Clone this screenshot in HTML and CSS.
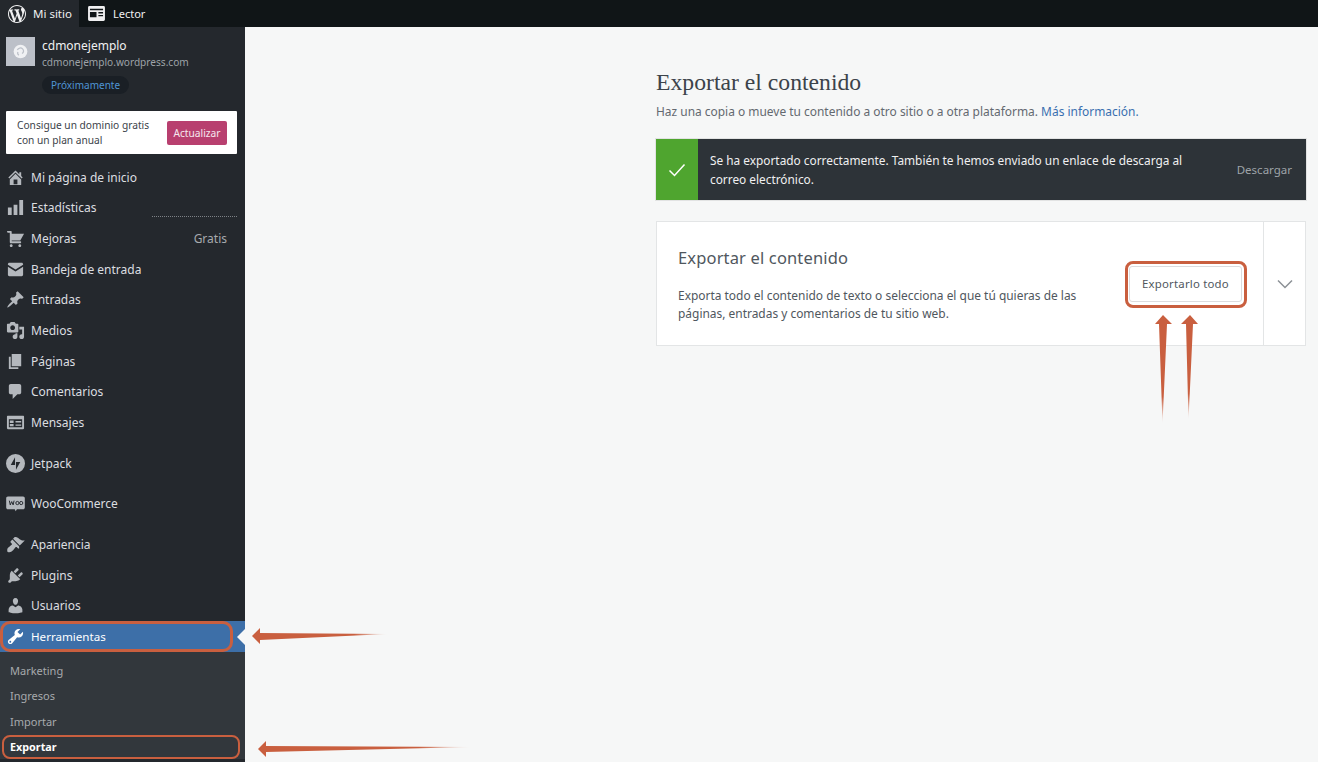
FILE: index.html
```html
<!DOCTYPE html>
<html lang="es">
<head>
<meta charset="utf-8">
<title>Exportar el contenido</title>
<link rel="stylesheet" href="styles.css">
</head>
<body>
<header class="topbar">
  <a class="tab tab-active">
    <svg class="wp-logo" viewBox="0 0 20 20"><path d="M20 10c0-5.51-4.49-10-10-10C4.48 0 0 4.49 0 10c0 5.52 4.48 10 10 10 5.51 0 10-4.48 10-10zM7.78 15.37L4.37 6.22c.55-.02 1.17-.08 1.17-.08.5-.06.44-1.13-.06-1.11 0 0-1.45.11-2.37.11-.18 0-.37 0-.58-.01C4.12 2.69 6.87 1.11 10 1.11c2.33 0 4.45.87 6.05 2.34-.68-.11-1.65.39-1.65 1.58 0 .74.45 1.36.9 2.1.35.61.55 1.36.55 2.46 0 1.49-1.4 5-1.4 5l-3.03-8.37c.54-.02.82-.17.82-.17.5-.05.44-1.25-.06-1.22 0 0-1.44.12-2.38.12-.87 0-2.33-.12-2.33-.12-.5-.03-.56 1.2-.06 1.22l.92.08 1.26 3.41zM17.41 10c.24-.64.74-1.87.43-4.25.7 1.29 1.05 2.71 1.05 4.25 0 3.29-1.73 6.24-4.4 7.78.97-2.59 1.94-5.2 2.92-7.78zM6.1 18.09C3.12 16.65 1.11 13.53 1.11 10c0-1.3.23-2.48.72-3.59C3.25 10.3 4.67 14.2 6.1 18.09zm4.03-6.63l2.58 6.98c-.86.29-1.76.45-2.71.45-.79 0-1.57-.11-2.29-.33.81-2.38 1.62-4.74 2.42-7.1z"/></svg>
    <span>Mi sitio</span>
  </a>
  <a class="tab">
    <svg class="reader" viewBox="0 0 18 16"><path fill-rule="evenodd" d="M1.500 0h15A1.500 1.500 0 0 1 18 1.500v13a1.500 1.500 0 0 1-1.500 1.500h-15A1.500 1.500 0 0 1 0 14.500v-13A1.500 1.500 0 0 1 1.500 0zM2 3v1.500h14V3zm0 3.500V12h7V6.500zm9 0V8h5V6.500zm0 3V11h5V9.500z"/></svg>
    <span>Lector</span>
  </a>
</header>

<div class="layout">
  <aside class="sidebar">
    <div class="site">
      <div class="site-icon"><svg viewBox="0 0 20 20"><circle cx="10" cy="10" r="6.500" fill="#f0f1f3"/><path d="M7 8.500c1-2 3.500-2.500 5-1s1 3.500-.5 4.500M8.500 13.500c-1-.5-1.500-1.500-1-3" fill="none" stroke="#bcc0c8" stroke-width="1.200"/></svg></div>
      <div class="site-info">
        <div class="site-name">cdmonejemplo</div>
        <div class="site-url">cdmonejemplo.wordpress.com</div>
        <div class="badge">Próximamente</div>
      </div>
    </div>

    <div class="upsell">
      <p>Consigue un dominio gratis<br>con un plan anual</p>
      <button class="upsell-btn">Actualizar</button>
    </div>

    <nav class="menu">
      <a class="item"><svg class="ic" viewBox="0 0 20 20"><path d="M16 8.500l1.530 1.530-1.060 1.060L10 4.620l-6.470 6.470-1.060-1.060L10 2.500l4 4v-2h2v4zm-6-2.460l6 5.990V18H4v-5.970zM12 17v-5H8v5h4z"/></svg><span>Mi página de inicio</span></a>
      <a class="item item-dotted"><svg class="ic" viewBox="0 0 20 20"><path d="M18 18V2h-4v16h4zm-6 0V7H8v11h4zm-6 0v-8H2v8h4z"/></svg><span>Estadísticas</span></a>
      <a class="item"><svg class="ic" viewBox="0 0 20 20"><path d="M6 13h9c.55 0 1 .45 1 1s-.45 1-1 1H5c-.55 0-1-.45-1-1V4H2c-.55 0-1-.45-1-1s.45-1 1-1h3c.55 0 1 .45 1 1v2h13l-4 7H6v1zm-.5 3c.83 0 1.500.67 1.500 1.500S6.330 19 5.500 19 4 18.330 4 17.500 4.670 16 5.500 16zm9 0c.83 0 1.500.67 1.500 1.500s-.67 1.500-1.500 1.500-1.500-.67-1.500-1.500.67-1.500 1.500-1.500z"/></svg><span>Mejoras</span><em class="tag">Gratis</em></a>
      <a class="item"><svg class="ic" viewBox="0 0 20 20"><path d="M2 4.500C2 3.700 2.700 3 3.500 3h13c.8 0 1.500.7 1.500 1.500V5l-8 5-8-5zM2 7l8 5 8-5v8.500c0 .8-.7 1.500-1.500 1.500h-13C2.700 17 2 16.300 2 15.500z"/></svg><span>Bandeja de entrada</span></a>
      <a class="item"><svg class="ic" viewBox="0 0 20 20"><path d="M10.440 3.020l1.820-1.820 6.360 6.350-1.830 1.820c-1.050-.68-2.480-.57-3.410.36l-.75.75c-.92.93-1.040 2.350-.35 3.410l-1.830 1.820-2.410-2.410-2.800 2.790c-.42.42-3.380 2.710-3.800 2.290s1.860-3.390 2.280-3.810l2.790-2.790L4.100 9.360l1.830-1.820c1.050.69 2.480.57 3.400-.36l.75-.75c.93-.92 1.050-2.350.36-3.410z"/></svg><span>Entradas</span></a>
      <a class="item"><svg class="ic" viewBox="0 0 20 20"><path d="M13 11V4c0-.55-.45-1-1-1h-1.670L9 1H5L3.670 3H2c-.55 0-1 .45-1 1v7c0 .55.45 1 1 1h10c.55 0 1-.45 1-1zM7 4.500c1.380 0 2.500 1.120 2.500 2.500S8.380 9.500 7 9.500 4.500 8.380 4.500 7 5.620 4.500 7 4.500zM14 6h5v10.500c0 1.380-1.120 2.500-2.500 2.500S14 17.880 14 16.500s1.120-2.500 2.500-2.500c.17 0 .34.02.5.05V9h-3V6zm-4 8.050V13h2v3.500c0 1.380-1.120 2.500-2.500 2.500S7 17.880 7 16.500 8.120 14 9.500 14c.17 0 .34.02.5.05z"/></svg><span>Medios</span></a>
      <a class="item"><svg class="ic" viewBox="0 0 20 20"><path d="M6 15V2h10v13H6zm-1 1h8v2H3V5h2v11z"/></svg><span>Páginas</span></a>
      <a class="item"><svg class="ic" viewBox="0 0 20 20"><path d="M5 2h9c1.100 0 2 .9 2 2v7c0 1.100-.9 2-2 2h-2l-5 5v-5H5c-1.100 0-2-.9-2-2V4c0-1.100.9-2 2-2z"/></svg><span>Comentarios</span></a>
      <a class="item"><svg class="ic" viewBox="0 0 20 20"><path fill-rule="evenodd" d="M2 3h16c.55 0 1 .45 1 1v12c0 .55-.45 1-1 1H2c-.55 0-1-.45-1-1V4c0-.55.45-1 1-1zm1 3.500V15h14V6.500zM4 8h4v2.500H4zm0 3.500h4V14H4zM10 8.500h6V10h-6zm0 3.500h6v1.500h-6z"/></svg><span>Mensajes</span></a>

      <a class="item item-gap"><svg class="ic ic-lg" viewBox="0 0 20 20"><path fill-rule="evenodd" d="M10 0a10 10 0 1 1 0 20 10 10 0 0 1 0-20zM9.500 3.500L5 11.500h4.500zM10.500 16.500l4.500-8h-4.500z"/></svg><span>Jetpack</span></a>
      <a class="item item-gap"><svg class="ic ic-lg" viewBox="0 0 20 20"><path d="M2 2.500h16c1 0 1.800.8 1.800 1.800v10c0 1-.8 1.800-1.800 1.800h-6.500l-1.300 2-1-2H2c-1 0-1.800-.8-1.800-1.800v-10c0-1 .8-1.800 1.800-1.800z"/><path d="M3.500 7l1 4.500 1.500-3.500 1.500 3.500 1-4.500" fill="none" stroke="#24282d" stroke-width="1"/><circle cx="12" cy="9.500" r="1.700" fill="none" stroke="#24282d"/><circle cx="16" cy="9.500" r="1.700" fill="none" stroke="#24282d"/></svg><span>WooCommerce</span></a>
      <a class="item item-gap"><svg class="ic" viewBox="0 0 20 20"><path d="M14.480 11.060L7.410 3.990l1.500-1.500c.5-.56 2.300-.47 3.510.32 1.210.8 1.430 1.280 2.910 2.100 1.180.64 2.450 1.260 4.450.85zm-.71.71L6.700 4.700 4.930 6.470c-.39.39-.39 1.020 0 1.410l1.060 1.060c.39.39.39 1.030 0 1.420-.6.6-1.430 1.110-2.210 1.690-.35.26-.7.53-1.010.84C1.430 13.710.96 15.180 1.500 17.500l.37.37c2.320.54 3.790.07 5.610-1.770.3-.31.58-.66.84-1.010.58-.78 1.090-1.610 1.690-2.210.39-.39 1.020-.39 1.410 0l1.060 1.060c.39.39 1.020.39 1.410 0z"/></svg><span>Apariencia</span></a>
      <a class="item"><svg class="ic" viewBox="0 0 20 20"><path d="M13.110 4.360L9.870 7.600 8 5.730l3.240-3.240c.35-.34 1.050-.2 1.560.32.52.51.66 1.210.31 1.550zm-8 1.770l.91-1.120 9.010 9.010-1.190.84c-.71.71-2.630 1.160-3.820 1.160H6.140L4.900 17.260c-.59.59-1.540.59-2.120 0-.59-.58-.59-1.530 0-2.120l1.240-1.240v-3.880c0-1.130.4-3.190 1.090-3.890zm7.260 3.970l3.240-3.240c.34-.35 1.040-.21 1.550.31.52.51.66 1.210.31 1.550l-3.240 3.250z"/></svg><span>Plugins</span></a>
      <a class="item"><svg class="ic" viewBox="0 0 20 20"><path d="M10 9.250c-2.270 0-2.730-3.440-2.730-3.440C7 4.020 7.820 2 9.970 2c2.160 0 2.980 2.020 2.710 3.810 0 0-.41 3.440-2.680 3.440zm0 2.570L12.720 10c2.390 0 4.520 2.330 4.520 4.530v2.490s-3.650 1.130-7.240 1.130c-3.650 0-7.240-1.130-7.240-1.130v-2.490c0-2.250 1.940-4.480 4.470-4.480z"/></svg><span>Usuarios</span></a>
      <a class="item item-selected"><svg class="ic" viewBox="0 0 20 20"><path d="M16.680 9.770c-1.340 1.340-3.300 1.670-4.950.99l-5.410 6.520c-.99.99-2.590.99-3.580 0s-.99-2.590 0-3.570l6.520-5.420c-.68-1.650-.35-3.610.99-4.950 1.280-1.280 3.120-1.620 4.720-1.060l-2.890 2.890 2.820 2.820 2.860-2.870c.53 1.580.18 3.390-1.080 4.680zM3.810 16.210c.4.39 1.040.39 1.430 0 .4-.4.4-1.040 0-1.430-.39-.4-1.030-.4-1.430 0-.39.39-.39 1.030 0 1.430z"/></svg><span>Herramientas</span><i class="ring ring-tools"></i></a>
      <div class="submenu">
        <a class="sub">Marketing</a>
        <a class="sub">Ingresos</a>
        <a class="sub">Importar</a>
        <a class="sub sub-current">Exportar<i class="ring ring-export"></i></a>
      </div>
    </nav>
  </aside>

  <main class="content">
    <h1 class="title">Exportar el contenido</h1>
    <p class="subtitle">Haz una copia o mueve tu contenido a otro sitio o a otra plataforma. <a class="link">Más información.</a></p>

    <div class="notice">
      <div class="notice-icon"><svg viewBox="0 0 20 20"><path d="M2.500 10.500l5 5 10-11" fill="none" stroke="#fff" stroke-width="1.500"/></svg></div>
      <p class="notice-text">Se ha exportado correctamente. También te hemos enviado un enlace de descarga al correo electrónico.</p>
      <a class="notice-action">Descargar</a>
    </div>

    <section class="card">
      <div class="card-body">
        <div class="card-text">
          <h2>Exportar el contenido</h2>
          <p>Exporta todo el contenido de texto o selecciona el que tú quieras de las páginas, entradas y comentarios de tu sitio web.</p>
        </div>
        <button class="export-btn">Exportarlo todo<i class="ring ring-btn"></i></button>
      </div>
      <div class="card-toggle"><svg viewBox="0 0 16 10"><path d="M1 1.500l7 7 7-7" fill="none" stroke="#8c9196" stroke-width="1.500"/></svg></div>
    </section>
  </main>
</div>

<svg class="annotations" viewBox="0 0 1318 762">
  <defs>
    <linearGradient id="fadeH" x1="0" x2="1" y1="0" y2="0"><stop offset="0" stop-color="#c95f3f"/><stop offset=".75" stop-color="#c95f3f"/><stop offset="1" stop-color="#c95f3f" stop-opacity="0"/></linearGradient>
    <linearGradient id="fadeV" x1="0" x2="0" y1="0" y2="1"><stop offset="0" stop-color="#c95f3f"/><stop offset=".75" stop-color="#c95f3f"/><stop offset="1" stop-color="#c95f3f" stop-opacity="0"/></linearGradient>
  </defs>
  <polygon fill="url(#fadeH)" points="252,636 260,628 260,633 388,634 260,640 260,644"/>
  <polygon fill="url(#fadeH)" points="258,749 266,741 266,746 472,747 266,752 266,757"/>
  <polygon fill="url(#fadeV)" points="1163,315 1172,324 1167,324 1162.500,424 1159,324 1155,324"/>
  <polygon fill="url(#fadeV)" points="1190,315 1198,324 1193,324 1188.500,420 1186,324 1181,324"/>
</svg>
</body>
</html>
```

FILE: styles.css
```css
* { box-sizing: border-box; }
html, body { height: 100%; }
body {
  margin: 0;
  height: 762px;
  overflow: hidden;
  position: relative;
  display: flex;
  flex-direction: column;
  background: #f6f7f7;
  color: #2c3338;
  font-family: "Noto Sans", "Open Sans", sans-serif;
}
p, h1, h2 { margin: 0; font-weight: 400; }

/* top bar */
.topbar { height: 27px; flex: none; display: flex; background: #101517; color: #f0f0f1; font-size: 11px; }
.tab { display: flex; align-items: center; height: 27px; }
.tab-active { width: 79px; padding-left: 8px; gap: 7px; background: #24282d; font-size: 11.500px; }
.tab:not(.tab-active) { padding-left: 9px; gap: 8px; }
.wp-logo { width: 18px; height: 18px; fill: #f0f0f1; }
.reader { width: 17px; height: 15px; fill: #f0f0f1; }

/* layout */
.layout { flex: 1; min-height: 0; display: flex; }
.sidebar { width: 245px; flex: none; background: #24282d; color: #dcdee0; display: flex; flex-direction: column; }
.content { flex: 1; min-width: 0; padding: 42px 12px 0 411px; }

/* site header */
.site { height: 84px; padding: 10px 6px 0; display: flex; gap: 7px; }
.site-icon { width: 29px; height: 29px; background: #bcc0c8; display: flex; flex: none; padding: 4px; }
.site-info { min-width: 0; }
.site-name { font-size: 12px; line-height: 16px; margin-top: 1px; color: #f0f0f1; }
.site-url { font-size: 10.100px; line-height: 15px; margin-top: 1px; color: #9ea3a8; }
.badge { display: inline-block; height: 18px; line-height: 18px; margin-top: 6px; padding: 0 9px; font-size: 10px; border-radius: 9px; background: #1a1f25; color: #4f94d4; }

/* upsell */
.upsell { margin: 0 8px 0 6px; height: 43px; background: #fff; border-radius: 1px; display: flex; align-items: center; justify-content: space-between; padding: 0 10px 0 11px; color: #3c434a; }
.upsell p { font-size: 10.200px; line-height: 15px; }
.upsell-btn { width: 60px; height: 24px; border: 0; padding: 0; border-radius: 2px; background: #b83f6f; color: #f6e7ee; font: inherit; font-size: 10.200px; }

/* menu */
.menu { margin-top: 8px; display: flex; flex-direction: column; }
.item { height: 30.670px; display: flex; align-items: center; padding-left: 6px; gap: 6px; font-size: 12px; position: relative; }
.item-gap { margin-top: 10px; }
.ic { width: 19px; height: 19px; flex: none; fill: #b4b8bd; }
.ic-lg { width: 19px; height: 19px; }
.tag { margin-left: auto; margin-right: 18px; font-style: normal; color: #a7aaad; font-size: 12px; }
.item-dotted::after { content: ""; position: absolute; left: 152px; right: 8px; top: 23px; border-top: 1px dotted #7d8186; }
.item-selected { background: #3d6fa8; color: #fff; font-size: 11.600px; }
.item-selected .ic { fill: #fff; }
.item-selected::after { content: ""; position: absolute; right: 0; top: 50%; margin-top: -8px; border: 8px solid transparent; border-right-color: #f6f7f7; border-left-width: 0; }

.submenu { flex: 1; background: #32373c; padding-top: 6px; }
.sub { display: flex; align-items: center; height: 25.300px; padding-left: 10px; font-size: 11px; color: #a7aaad; position: relative; }
.sub-current { color: #fff; font-weight: 700; font-size: 10.800px; }

.ring { position: absolute; border: 3px solid #c95f3f; pointer-events: none; }
.ring-tools { left: 0; top: 0; width: 233px; height: 31px; border-radius: 10px; }
.ring-export { left: 2px; top: 1px; width: 238px; height: 24px; border-radius: 8px; border-width: 2px; }
.ring-btn { left: -5px; top: -6px; width: 122px; height: 47px; border-radius: 8px; }

/* main */
.title { font-family: "Liberation Serif", "DejaVu Serif", serif; font-size: 23.700px; line-height: 26px; color: #3c434a; }
.subtitle { margin-top: 8px; font-size: 11.950px; line-height: 18px; color: #646970; }
.link { color: #3a6fb0; }

.notice { margin-top: 18px; height: 61px; display: flex; align-items: center; background: #2d3338; color: #f0f0f1; box-shadow: 0 0 0 1px rgba(0,0,0,.08); }
.notice-icon { width: 42px; height: 100%; flex: none; background: #4fa52f; display: flex; align-items: center; justify-content: center; }
.notice-icon svg { width: 20px; height: 20px; }
.notice-text { flex: 1; padding: 0 40px 0 12px; font-size: 11.850px; line-height: 19px; }
.notice-action { margin-right: 14px; font-size: 11.500px; color: #9ea3a8; }

.card { margin-top: 21px; height: 125px; display: flex; background: #fff; border: 1px solid #e3e5e6; }
.card-body { flex: 1; min-width: 0; position: relative; display: flex; align-items: center; justify-content: space-between; padding: 0 21px 0 21px; }
.card-text { margin-top: 2px; }
.card-text h2 { font-size: 16.500px; line-height: 22px; color: #50575e; letter-spacing: .15px; }
.card-text p { margin-top: 18px; width: 420px; font-size: 11.950px; line-height: 18px; color: #50575e; }
.export-btn { position: relative; width: 113px; height: 36px; padding: 0; background: #fff; border: 1px solid #dcdcde; border-radius: 3px; font: inherit; font-size: 11.400px; color: #50575e; letter-spacing: .2px; }
.card-toggle { width: 42px; flex: none; border-left: 1px solid #e3e5e6; display: flex; align-items: center; justify-content: center; }
.card-toggle svg { width: 16px; height: 10px; }

.annotations { position: absolute; left: 0; top: 0; width: 1318px; height: 762px; pointer-events: none; }
```
